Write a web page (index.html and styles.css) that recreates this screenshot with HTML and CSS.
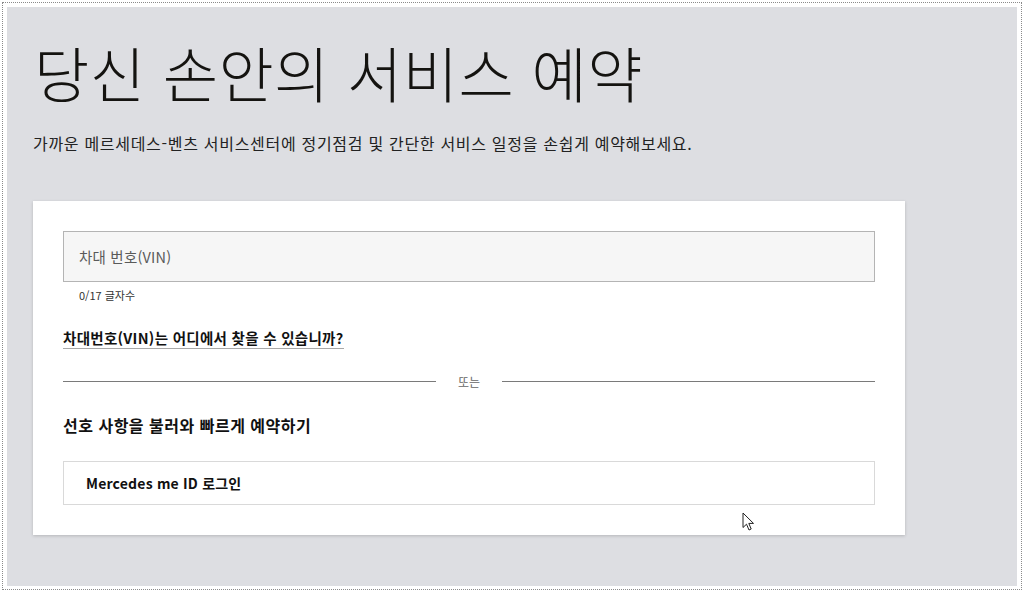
FILE: index.html
```html
<!DOCTYPE html>
<html lang="ko">
<head>
    <meta charset="utf-8">
    <title>서비스 예약</title>
    <link rel="stylesheet" href="styles.css">
</head>
<body>
<div class="frame">
    <div class="page">
        <h1 class="title">당신 손안의 서비스 예약</h1>
        <p class="intro">가까운 메르세데스-벤츠 서비스센터에 정기점검 및 간단한 서비스 일정을 손쉽게 예약해보세요.</p>
        <div class="card">
            <div class="field">
                <input type="text" placeholder="차대 번호(VIN)" maxlength="17">
            </div>
            <div class="counter">0/17 글자수</div>
            <a href="#" class="vin-link">차대번호(VIN)는 어디에서 찾을 수 있습니까?</a>
            <div class="divider">
                <span class="line"></span>
                <span class="or">또는</span>
                <span class="line"></span>
            </div>
            <div class="subhead">선호 사항을 불러와 빠르게 예약하기</div>
            <button class="login-btn" type="button">Mercedes me ID 로그인</button>
        </div>
    </div>
</div>
<svg class="cursor" width="13" height="20" viewBox="0 0 13 20">
    <path d="M1 1 L1 15.5 L4.5 12.2 L7 18 L9.2 17 L6.8 11.4 L11.5 11.4 Z" fill="#fff" stroke="#222" stroke-width="1" stroke-linejoin="round"/>
</svg>
</body>
</html>
```

FILE: styles.css
```css
*{
    margin:0;
    padding:0;
    box-sizing:border-box;
    font-family:"Noto Sans CJK KR", "Noto Sans", sans-serif;
}
html,body{
    width:100%;
    height:100%;
    background:#fff;
    overflow:hidden;
}
body{
    position:relative;
}
.frame{
    margin:2px 2px 3px 2px;
    border:1px dotted #8a8a8a;
    padding:4px 4px 3px 4px;
}
.page{
    height:579px;
    background:#dddee2;
    padding:29px 0 0 26px;
}
.title{
    font-size:60px;
    font-weight:300;
    line-height:72px;
    letter-spacing:0.5px;
    color:#141310;
    margin-left:1px;
}
.intro{
    margin-top:24px;
    font-size:16px;
    letter-spacing:0.7px;
    line-height:22px;
    color:#222;
}
.card{
    width:872px;
    margin-top:47px;
    background:#fff;
    padding:30px;
    box-shadow:0 1px 3px rgba(0, 0, 0, 0.18);
}
.field input{
    width:100%;
    height:51px;
    background:#f6f6f6;
    border:1px solid #b4b4b4;
    padding-left:15px;
    font-size:14.5px;
    letter-spacing:0.2px;
    color:#333;
    outline:none;
}
.field input::placeholder{
    color:#5a5a5a;
}
.counter{
    margin-top:5px;
    padding-left:16px;
    font-size:11px;
    line-height:16px;
    color:#333;
}
.vin-link{
    display:inline-block;
    margin-top:25px;
    font-size:14.5px;
    letter-spacing:0.3px;
    font-weight:700;
    line-height:20px;
    color:#111;
    text-decoration:none;
    border-bottom:1px solid #a8a8a8;
}
.divider{
    display:flex;
    align-items:center;
    height:16px;
    margin-top:24px;
}
.divider .line{
    flex:1;
    height:1px;
    background:#7a7a7a;
}
.divider .or{
    margin:0 22px;
    font-size:12px;
    color:#666;
}
.subhead{
    margin-top:25px;
    font-size:16px;
    letter-spacing:0.5px;
    font-weight:700;
    line-height:22px;
    color:#111;
}
.login-btn{
    display:block;
    width:100%;
    height:44px;
    margin-top:25px;
    background:#fff;
    border:1px solid #d9d9d9;
    text-align:left;
    padding-left:22px;
    font-size:14px;
    letter-spacing:0.2px;
    font-weight:700;
    color:#111;
    cursor:pointer;
}
.cursor{
    position:absolute;
    left:742px;
    top:512px;
}
```
